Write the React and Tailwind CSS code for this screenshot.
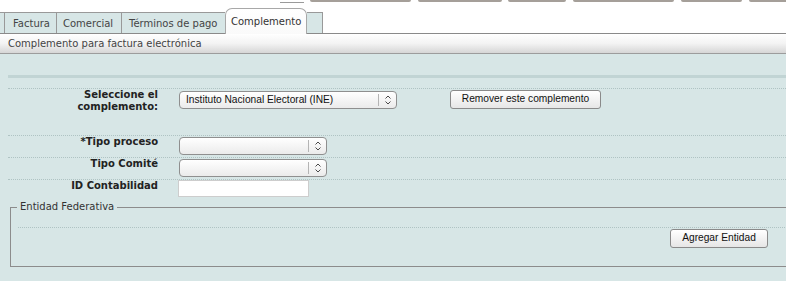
import React from 'react'

const arial = "font-['Liberation_Sans',Arial,sans-serif]"

function Chevrons() {
  return (
    <svg width="8" height="12" viewBox="0 0 8 12" className="block">
      <path d="M1.5 4.5 L4 2 L6.5 4.5" fill="none" stroke="#4a4a4a" strokeWidth="1" />
      <path d="M1.5 7.5 L4 10 L6.5 7.5" fill="none" stroke="#4a4a4a" strokeWidth="1" />
    </svg>
  )
}

function FakeSelect({ value, className }) {
  return (
    <div
      className={`flex items-center h-[18px] rounded-[4px] border border-[#8f8f8f] bg-gradient-to-b from-white to-[#ebebeb] ${className}`}
    >
      <span className={`flex-1 pl-[6px] text-[10.2px] leading-none text-[#111] ${arial} truncate`}>
        {value}
      </span>
      <div className="h-[12px] border-l border-[#b4b4b4]" />
      <div className="w-[17px] flex justify-center">
        <Chevrons />
      </div>
    </div>
  )
}

function Button({ children, className }) {
  return (
    <button
      className={`h-[19px] rounded-[3px] border border-[#8a8a8a] bg-gradient-to-b from-white to-[#e6e6e6] text-[10.2px] leading-none text-[#111] ${arial} ${className}`}
    >
      {children}
    </button>
  )
}

const label = 'w-[150px] shrink-0 text-right font-bold text-[10px] leading-[12px] text-[#222]'
const row = 'flex items-start border-t border-dotted border-[#afc3c3]'

export default function App() {
  return (
    <div className="w-[786px] h-[281px] overflow-hidden bg-white font-['DejaVu_Sans',sans-serif]">
      <div className="w-[820px]">
        {/* Top toolbar (cut off) */}
        <div className="h-[8px] flex items-start">
          <div className="ml-[280px] mt-[2px] w-[24px] h-px bg-[#9a9a9a]" />
          <div className="ml-[6px] w-[101px] h-[2px] rounded-b-[2px] bg-[#a59f99]" />
          <div className="ml-[7px] w-[84px] h-[2px] rounded-b-[2px] bg-[#a59f99]" />
          <div className="ml-[6px] w-[58px] h-[2px] rounded-b-[2px] bg-[#a59f99]" />
          <div className="ml-[7px] w-[101px] h-[2px] rounded-b-[2px] bg-[#a59f99]" />
          <div className="ml-[7px] w-[61px] h-[2px] rounded-b-[2px] bg-[#a59f99]" />
          <div className="ml-[7px] w-[60px] h-[2px] rounded-b-[2px] bg-[#a59f99]" />
        </div>

        {/* Tabs */}
        <div className="h-[25px] flex items-end text-[10px] text-[#444]">
          <div className="w-[5px] h-[21px] border-t border-r border-[#999] bg-[#d7e6e6]" />
          <div className="w-[52px] h-[21px] border-t border-r border-[#999] bg-[#d7e6e6] flex items-center pl-[8px]">
            Factura
          </div>
          <div className="w-[65px] h-[21px] border-t border-r border-[#999] bg-[#d7e6e6] flex items-center pl-[6px]">
            Comercial
          </div>
          <div className="w-[103px] h-[21px] border-t border-[#999] bg-[#d7e6e6] flex items-center pl-[7px]">
            Términos de pago
          </div>
          <div className="relative z-10 -mb-px w-[82px] h-[26px] rounded-t-[7px] border-t border-x border-[#a8a8a8] bg-gradient-to-b from-white to-[#fafafa] flex items-center pl-[5px] pb-[1px] text-[#333]">
            Complemento
          </div>
          <div className="w-[16px] h-[21px] border-t border-r border-[#999] bg-[#d7e6e6]" />
        </div>

        {/* Header bar */}
        <div className="h-[21px] border-t border-b border-t-[#8a8a8a] border-b-[#9c9c9c] bg-gradient-to-b from-white via-[#f3f3f3] to-[#d6d6d6] flex items-center pl-[8px] text-[10px] text-[#444]">
          Complemento para factura electrónica
        </div>

        {/* Main panel */}
        <div className="h-[227px] bg-[#d7e6e6] pl-[8px] pt-[21px]">
          <div className="h-[3px] bg-[#c1d4d4]" />
          <div className="h-[10px]" />

          <div className={`${row} h-[47px]`}>
            <div className={label}>
              Seleccione el
              <br />
              complemento:
            </div>
            <FakeSelect value="Instituto Nacional Electoral (INE)" className="ml-[21px] mt-[2px] w-[218px]" />
            <Button className="ml-[53px] mt-[1px] w-[151px]">Remover este complemento</Button>
          </div>

          <div className={`${row} h-[22px]`}>
            <div className={label}>*Tipo proceso</div>
            <FakeSelect value="" className="ml-[21px] mt-[1px] w-[148px]" />
          </div>

          <div className={`${row} h-[22px]`}>
            <div className={label}>Tipo Comité</div>
            <FakeSelect value="" className="ml-[21px] mt-[1px] w-[148px]" />
          </div>

          <div className={`${row} h-[21px]`}>
            <div className={label}>ID Contabilidad</div>
            <div className="ml-[20px] w-[131px] h-[17px] bg-white border border-[#cdcdcd]" />
          </div>

          <fieldset className="ml-[2px] w-[800px] border border-[#8c8c8c] px-[6px]">
            <legend className="px-[3px] text-[10px] leading-[14px] text-[#333]">Entidad Federativa</legend>
            <div className="h-[13px]" />
            <div className="ml-[1px] h-[39px] border-t border-dotted border-[#afc3c3] flex justify-end pr-[35px]">
              <Button className="mt-[1px] w-[98px]">Agregar Entidad</Button>
            </div>
          </fieldset>
        </div>
      </div>
    </div>
  )
}
